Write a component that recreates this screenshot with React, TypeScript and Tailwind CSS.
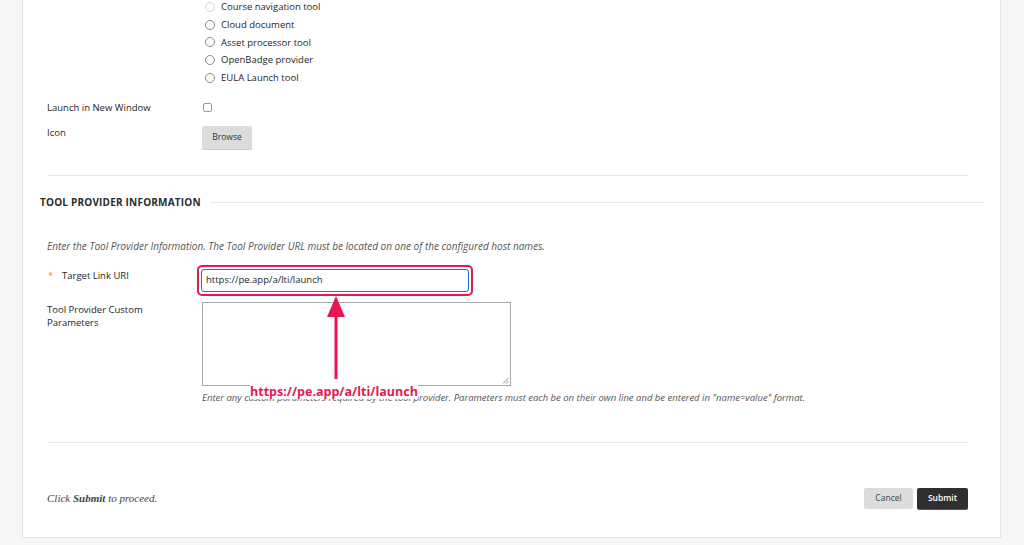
import React from 'react';

const placements = [
  { label: 'Course navigation tool', disabled: true },
  { label: 'Cloud document' },
  { label: 'Asset processor tool' },
  { label: 'OpenBadge provider' },
  { label: 'EULA Launch tool' },
];

const Radio = ({ disabled }: { disabled?: boolean }) => (
  <span
    className={`inline-block w-[10px] h-[10px] rounded-full border bg-white ${
      disabled ? 'border-[#d8d8d8] bg-[#f2f2f2]' : 'border-[#8a8a8a]'
    }`}
  />
);

export default function App() {
  return (
    <div className="min-h-[545px] bg-[#f6f6f6] text-[#262626] font-['Open_Sans',sans-serif] overflow-hidden">
      <div className="relative ml-[22px] w-[979px] h-[540px] bg-white border-x border-b border-[#e3e3e3]">
        {/* placement list */}
        <div className="pl-[24px] pr-[32px]">
          <div className="flex flex-col ml-[155px] -mt-[2px]">
            {placements.map((p) => (
              <div key={p.label} className="flex items-center h-[17.75px] gap-[6px] pl-[3px]">
                <Radio disabled={p.disabled} />
                <span className="text-[9.5px] leading-none">{p.label}</span>
              </div>
            ))}
          </div>

          <div className="flex items-center mt-[12px] h-[18px]">
            <div className="w-[155px] text-[9.5px]">Launch in New Window</div>
            <span className="inline-block w-[9px] h-[9px] ml-[1px] border border-[#9a9a9a] rounded-[2px]" />
          </div>

          <div className="flex items-start mt-[8px]">
            <div className="w-[155px] text-[9.5px] pt-[1px]">Icon</div>
            <button className="w-[50px] h-[23px] mt-[1px] bg-[#dcdcdc] rounded-[2px] text-[8.5px] text-[#333] shadow-[0_1px_0_#ccc]">
              Browse
            </button>
          </div>

          <div className="mt-[26px] h-px bg-[#e8e8e8]" />
        </div>

        {/* section heading */}
        <div className="flex items-center mt-[19px] pl-[17px] pr-[15px] gap-[9px]">
          <h2 className="text-[10px] font-bold text-[#2b2b2b] tracking-[0.2px] whitespace-nowrap">
            TOOL PROVIDER INFORMATION
          </h2>
          <div className="flex-1 h-px bg-[#e8e8e8]" />
        </div>

        <div className="pl-[24px] pr-[32px]">
          <p className="mt-[29px] text-[10px] italic text-[#555] whitespace-nowrap">
            Enter the Tool Provider Information. The Tool Provider URL must be located on one of the configured host names.
          </p>

          <div className="flex items-center mt-[11px]">
            <div className="w-[155px] text-[9.5px] flex items-center -mt-[8px]">
              <span className="text-[#f08a24] w-[15px] pl-[1px]">*</span>
              Target Link URI
            </div>
            <div className="-ml-[5px] p-[2px] border-2 border-[#e5194f] rounded-[5px]">
              <div className="w-[268px] h-[23px] border-[1.5px] border-[#1f74c8] rounded-[3px] flex items-center px-[4px] text-[9.5px]">
                https://pe.app/a/lti/launch
              </div>
            </div>
          </div>

          <div className="flex items-start mt-[6px]">
            <div className="w-[155px] text-[9.5px] leading-[13px] pt-[1px]">
              Tool Provider Custom
              <br />
              Parameters
            </div>
            <div className="relative w-[309px] h-[84px] border border-[#a9a9a9]">
              <svg className="absolute right-[1px] bottom-[1px]" width="7" height="7" viewBox="0 0 7 7">
                <path d="M6.5 1 L1 6.5 M6.5 4 L4 6.5" stroke="#777" strokeWidth="0.8" />
              </svg>
            </div>
          </div>

          <p className="ml-[155px] mt-[5px] text-[9.5px] italic text-[#555] whitespace-nowrap">
            Enter any custom parameters required by the tool provider. Parameters must each be on their own line and be entered in "name=value" format.
          </p>

          <div className="mt-[37px] h-px bg-[#e8e8e8]" />

          <div className="flex items-center justify-between mt-[45px]">
            <p className="text-[11px] italic text-[#444] font-['Liberation_Serif',serif]">
              Click <b>Submit</b> to proceed.
            </p>
            <div className="flex gap-[4px]">
              <button className="w-[49px] h-[21px] bg-[#dcdcdc] rounded-[2px] text-[8.5px] text-[#444]">Cancel</button>
              <button className="w-[51px] h-[21px] bg-[#2f2f2f] rounded-[2px] text-[8.5px] font-semibold text-white shadow-[0_1px_0_#555]">
                Submit
              </button>
            </div>
          </div>
        </div>

        {/* annotation arrow */}
        <svg className="absolute left-[301px] top-[297px]" width="24" height="86" viewBox="0 0 24 86">
          <polygon points="12,1 3,22 21,22" fill="#e5194f" />
          <rect x="10.5" y="20" width="3" height="64" fill="#e5194f" />
        </svg>
        <span className="absolute left-[227px] top-[387px] bg-white text-[12.5px] leading-[14px] font-bold text-[#e5194f]">
          https://pe.app/a/lti/launch
        </span>
      </div>
    </div>
  );
}
